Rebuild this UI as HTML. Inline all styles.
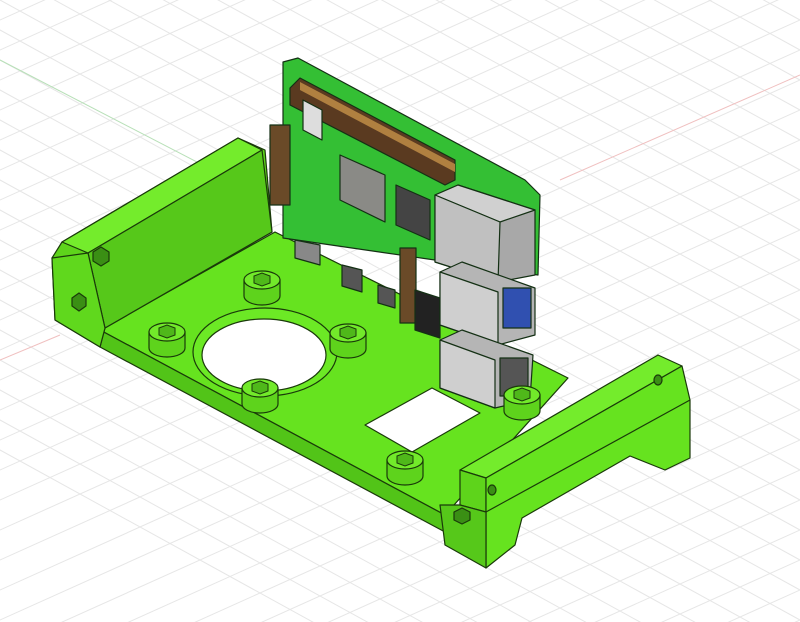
<!DOCTYPE html>
<html><head><meta charset="utf-8"><style>html,body{margin:0;padding:0;background:#fff;width:800px;height:622px;overflow:hidden}svg{display:block}</style></head>
<body>
<svg width="800" height="622" viewBox="0 0 800 622" xmlns="http://www.w3.org/2000/svg">
<defs>
<g id="so">
<path d="M-18,0 L-18,16 A18,9 0 0 0 18,16 L18,0 Z" fill="#5ed31c" stroke="#1a3a0a" stroke-width="1.2"/>
<ellipse cx="0" cy="0" rx="18" ry="9" fill="#72ea2a" stroke="#1a3a0a" stroke-width="1.2"/>
<polygon points="-8,-4 0,-7 8,-4 8,3 0,6 -8,3" fill="#4fb81a" stroke="#1a3a0a" stroke-width="1"/>
</g>
</defs>
<rect width="800" height="622" fill="#fff"/>
<g stroke="#e6e6e6" stroke-width="1" fill="none">
<path d="M-400,200 L1200,-520 M-400,230 L1200,-490 M-400,260 L1200,-460 M-400,290 L1200,-430 M-400,320 L1200,-400 M-400,350 L1200,-370 M-400,380 L1200,-340 M-400,410 L1200,-310 M-400,440 L1200,-280 M-400,470 L1200,-250 M-400,500 L1200,-220 M-400,530 L1200,-190 M-400,560 L1200,-160 M-400,590 L1200,-130 M-400,620 L1200,-100 M-400,650 L1200,-70 M-400,680 L1200,-40 M-400,710 L1200,-10 M-400,740 L1200,20 M-400,770 L1200,50 M-400,800 L1200,80 M-400,830 L1200,110 M-400,860 L1200,140 M-400,890 L1200,170 M-400,920 L1200,200 M-400,950 L1200,230 M-400,980 L1200,260 M-400,1010 L1200,290 M-400,1040 L1200,320 M-400,1070 L1200,350 M-400,1100 L1200,380 M-400,1130 L1200,410 M-400,1160 L1200,440 M-400,1190 L1200,470 M-400,1220 L1200,500 M-400,1250 L1200,530 M-400,1280 L1200,560 M-400,1310 L1200,590 M-400,1340 L1200,620 M-400,1370 L1200,650"/>
<path d="M-400,-400 L1200,480 M-400,-370 L1200,510 M-400,-340 L1200,540 M-400,-310 L1200,570 M-400,-280 L1200,600 M-400,-250 L1200,630 M-400,-220 L1200,660 M-400,-190 L1200,690 M-400,-160 L1200,720 M-400,-130 L1200,750 M-400,-100 L1200,780 M-400,-70 L1200,810 M-400,-40 L1200,840 M-400,-10 L1200,870 M-400,20 L1200,900 M-400,50 L1200,930 M-400,80 L1200,960 M-400,110 L1200,990 M-400,140 L1200,1020 M-400,170 L1200,1050 M-400,200 L1200,1080 M-400,230 L1200,1110 M-400,-430 L1200,450 M-400,-460 L1200,420 M-400,-490 L1200,390 M-400,-520 L1200,360 M-400,-550 L1200,330 M-400,-580 L1200,300 M-400,-610 L1200,270 M-400,-640 L1200,240 M-400,-670 L1200,210 M-400,-700 L1200,180 M-400,-730 L1200,150 M-400,-760 L1200,120"/>
</g>
<path d="M0,60 L280,205" stroke="#b8e0b8" stroke-width="1"/>
<path d="M560,180 L800,75" stroke="#f0c0c0" stroke-width="1"/>
<path d="M0,360 L60,335" stroke="#f0c0c0" stroke-width="1"/>

<g stroke="#1a3a0a" stroke-width="1.2" stroke-linejoin="round">
<polygon points="100,330 275,232 568,378 445,515" fill="#66e31f"/>
<polygon points="100,330 445,515 445,532 100,347" fill="#52c418"/>
<polygon points="52,258 62,242 238,138 265,150 272,232 105,328 100,347 55,320" fill="#5ed41b"/>
<polygon points="62,242 238,138 262,150 88,253" fill="#74ec2c"/>
<polygon points="88,253 262,150 272,232 105,328" fill="#56c81a"/>
<polygon points="52,258 88,253 105,328 100,347 55,320" fill="#60d81d"/>
<polygon points="93,252 101,247 109,252 109,261 101,266 93,261" fill="#3a8f14"/>
<polygon points="72,298 79,293 86,298 86,306 79,311 72,306" fill="#3a8f14"/>
<polygon points="365,425 432,388 480,413 412,452" fill="#fff"/>
<ellipse cx="265" cy="352" rx="72" ry="44" fill="#6ce925"/>
<ellipse cx="264" cy="355" rx="62" ry="36" fill="#fff"/>
</g>
<g stroke="#143014" stroke-width="1.2" stroke-linejoin="round">
<polygon points="283,62 298,58 525,180 540,195 538,275 283,238" fill="#34bf34"/>
<polygon points="290,88 300,78 455,160 455,180 445,185 290,105" fill="#5a3a20"/>
<polygon points="300,82 455,164 455,172 300,90" fill="#b08040" stroke="none"/>
<polygon points="340,155 385,175 385,222 340,200" fill="#8a8a86"/>
<polygon points="396,185 430,200 430,240 396,225" fill="#444"/>
<polygon points="303,100 322,110 322,140 303,130" fill="#ddd"/>
<rect x="270" y="125" width="20" height="80" fill="#6a4a28"/>
<rect x="400" y="248" width="16" height="75" fill="#6a4a28"/>
<polygon points="295,240 320,245 320,265 295,258" fill="#888"/>
<polygon points="342,265 362,270 362,292 342,286" fill="#555"/>
<polygon points="378,285 395,290 395,308 378,303" fill="#555"/>
<polygon points="415,290 440,298 440,338 415,330" fill="#222"/>
<polygon points="435,195 458,185 535,210 535,275 498,282 435,262" fill="#a8a8a8"/>
<polygon points="435,195 458,185 535,210 500,222" fill="#d0d0d0"/>
<polygon points="435,195 500,222 498,282 435,262" fill="#c0c0c0"/>
<polygon points="440,272 462,262 535,288 535,335 498,345 440,325" fill="#b5b5b5"/>
<polygon points="440,272 498,292 498,345 440,325" fill="#cfcfcf"/>
<rect x="503" y="288" width="28" height="40" fill="#3050b0"/>
<polygon points="440,340 462,330 533,355 530,400 495,408 440,388" fill="#b5b5b5"/>
<polygon points="440,340 495,360 495,408 440,388" fill="#cfcfcf"/>
<rect x="500" y="358" width="28" height="38" fill="#555"/>
</g>
<use href="#so" x="167" y="332"/>
<use href="#so" x="262" y="280"/>
<use href="#so" x="348" y="333"/>
<use href="#so" x="260" y="388"/>
<use href="#so" x="405" y="460"/>
<use href="#so" x="522" y="395"/>
<g stroke="#1a3a0a" stroke-width="1.2" stroke-linejoin="round">
<polygon points="460,470 658,355 682,366 486,478" fill="#74ec2c"/>
<polygon points="460,470 486,478 486,512 460,505" fill="#5ed41b"/>
<polygon points="486,478 682,366 690,400 690,458 665,470 630,456 522,518 515,545 486,568" fill="#66e31f"/>
<polygon points="440,505 460,505 486,512 486,568 445,545" fill="#56c81a"/>
<line x1="486" y1="512" x2="690" y2="400"/>
<polygon points="454,512 462,508 470,512 470,520 462,524 454,520" fill="#3a8f14"/>
<ellipse cx="492" cy="490" rx="4" ry="5" fill="#3a8f14"/>
<ellipse cx="658" cy="380" rx="4" ry="5" fill="#3a8f14"/>
</g>
</svg>
</body></html>
